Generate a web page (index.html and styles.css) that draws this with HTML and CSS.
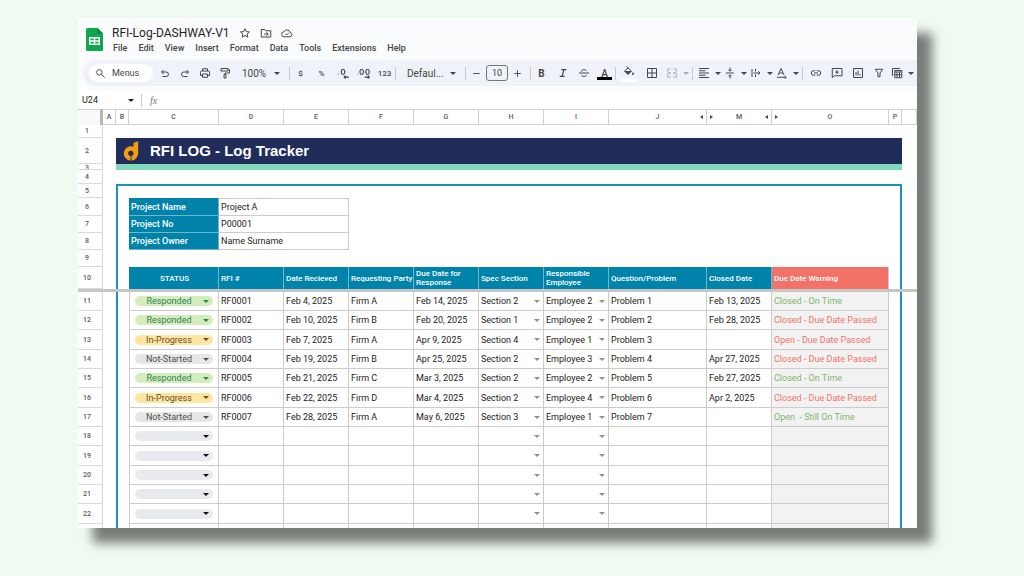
FILE: index.html
```html
<!DOCTYPE html>
<html lang="en">

<head>
    <meta charset="UTF-8">
    <meta name="viewport" content="width=device-width, initial-scale=1.0">
    <title>RFI-Log-DASHWAY-V1</title>
    <link rel="stylesheet" href="styles.css">
</head>

<body>
    <div class="window">
        <header class="doc-header">
            <svg class="doc-logo" viewBox="0 0 34 46">
                <path fill="#0fa84e" d="M3 0h20l11 11v32a3 3 0 0 1-3 3H3a3 3 0 0 1-3-3V3a3 3 0 0 1 3-3z" />
                <path fill="#0b8039" d="M23 0l11 11H23z" />
                <path fill="none" stroke="#fff" stroke-width="3" d="M7.500 19.500h19v13h-19zM17 19.500v13M7.500 26h19" />
            </svg>
            <div class="doc-info">
                <div class="title-row">
                    <h1>RFI-Log-DASHWAY-V1</h1>
                    <button class="title-btn" aria-label="Star">
                        <svg class="icon" viewBox="0 0 24 24"><path d="M12 3.500l2.600 5.800 6.400.6-4.800 4.200 1.400 6.200-5.600-3.300-5.600 3.300 1.400-6.200L3 9.900l6.400-.6z" /></svg>
                    </button>
                    <button class="title-btn" aria-label="Move">
                        <svg class="icon" viewBox="0 0 24 24"><path d="M2.500 5h7l2 2.500h10V20h-19zM8 14h8M13 10.500l3.500 3.500-3.500 3.500" /></svg>
                    </button>
                    <button class="title-btn" aria-label="Cloud status">
                        <svg class="icon" viewBox="0 0 24 24"><path d="M6.500 19.500a5 5 0 0 1-.5-10 6.500 6.500 0 0 1 12.200 1.500 4.300 4.300 0 0 1-.2 8.500zM8.500 13.500l2.500 2.500 4.500-4.500" /></svg>
                    </button>
                </div>
                <nav class="menu-row">
                    <button>File</button>
                    <button>Edit</button>
                    <button>View</button>
                    <button>Insert</button>
                    <button>Format</button>
                    <button>Data</button>
                    <button>Tools</button>
                    <button>Extensions</button>
                    <button>Help</button>
                </nav>
            </div>
        </header>

        <div class="toolbar">
            <label class="search">
                <svg class="icon" viewBox="0 0 24 24"><circle cx="9.500" cy="9.500" r="6" /><path d="M14 14l7 7" /></svg>
                <input type="text" placeholder="Menus" aria-label="Search the menus">
            </label>
            <div class="group history">
                <button class="tool" aria-label="Undo"><svg class="icon" viewBox="0 0 24 24"><path d="M9 6L5 10l4 4M5.500 10h9a4.500 4.500 0 0 1 0 9H7" /></svg></button>
                <button class="tool" aria-label="Redo"><svg class="icon" viewBox="0 0 24 24"><path d="M15 6l4 4-4 4M18.500 10h-9a4.500 4.500 0 0 0 0 9H17" /></svg></button>
                <button class="tool" aria-label="Print"><svg class="icon" viewBox="0 0 24 24"><path d="M7 8V3.500h10V8M7 17H3v-6.500A2.500 2.500 0 0 1 5.500 8h13a2.500 2.500 0 0 1 2.500 2.500V17h-4M7 14h10v6.500H7z" /></svg></button>
                <button class="tool" aria-label="Paint format"><svg class="icon" viewBox="0 0 24 24"><path d="M4 3h14v5H4zM18 5.500h3V12h-9v3M10 15h4v7h-4z" /></svg></button>
            </div>
            <span class="picker zoom">
                <select aria-label="Zoom"><option>100%</option></select>
            </span>
            <i class="sep"></i>
            <div class="group">
                <button class="tool small" aria-label="Currency">$</button>
                <button class="tool small" aria-label="Percent">%</button>
                <button class="tool" aria-label="Decrease decimals"><svg class="icon wide" viewBox="0 0 24 24"><path d="M3 14h1M12 14.500a3 4.500 0 1 1 .1 0zM22 19h-8M16.500 16.500L14 19l2.500 2.500" /></svg></button>
                <button class="tool" aria-label="Increase decimals"><svg class="icon wide" viewBox="0 0 24 24"><path d="M1 14h1M8 14.500a3 4.500 0 1 1 .1 0zM18 14.500a3 4.500 0 1 1 .1 0zM13 19h8M18.500 16.500L21 19l-2.500 2.500" /></svg></button>
                <button class="tool small" aria-label="More formats">123</button>
            </div>
            <i class="sep"></i>
            <span class="picker font">
                <select aria-label="Font"><option>Defaul...</option></select>
            </span>
            <i class="sep"></i>
            <div class="size">
                <button aria-label="Smaller"><svg class="icon" viewBox="0 0 24 24"><path d="M5 12h14" /></svg></button>
                <input type="text" value="10" aria-label="Font size">
                <button aria-label="Larger"><svg class="icon" viewBox="0 0 24 24"><path d="M5 12h14M12 5v14" /></svg></button>
            </div>
            <i class="sep"></i>
            <div class="group">
                <button class="tool text bold" aria-label="Bold">B</button>
                <button class="tool" aria-label="Italic"><svg class="icon heavy" viewBox="0 0 24 24"><path d="M8 4h12M4 20h12M14.500 4l-5 16" /></svg></button>
                <button class="tool" aria-label="Strikethrough"><svg class="icon" viewBox="0 0 24 24"><path d="M2 12h20M16.500 8c-.5-2-2-3-4.500-3S7.500 6.300 7.500 8.200c0 .8.300 1.300.8 1.800M7.500 16c.5 2 2 3 4.500 3s4.500-1.200 4.500-3" /></svg></button>
                <button class="tool text colored" aria-label="Text color">A</button>
            </div>
            <i class="sep"></i>
            <div class="group fills">
                <button class="tool fill" aria-label="Fill color"><svg class="icon" viewBox="0 0 24 24"><path d="M7 1l10 9-7 7-7-7 7-6" /><path class="solid" d="M3 10h14l-7 7zM20 12c1.500 2 2 3 2 3.800a2 2 0 0 1-4 0c0-.8.500-1.800 2-3.800z" /></svg></button>
                <button class="tool" aria-label="Borders"><svg class="icon" viewBox="0 0 24 24"><path d="M3 3h18v18H3zM12 3v18M3 12h18" /></svg></button>
                <button class="tool faded drop" aria-label="Merge cells"><svg class="icon" viewBox="0 0 24 24"><path d="M9 4H3v5M15 4h6v5M9 20H3v-5M15 20h6v-5M2 12h7M22 12h-7M6.500 9.500L9 12l-2.500 2.500M17.500 9.500L15 12l2.500 2.500" /></svg></button>
            </div>
            <i class="sep"></i>
            <div class="group aligns">
                <button class="tool drop" aria-label="Horizontal align"><svg class="icon" viewBox="0 0 24 24"><path d="M2 3h20M2 7.500h13M2 12h20M2 16.500h13M2 21h20" /></svg></button>
                <button class="tool drop" aria-label="Vertical align"><svg class="icon" viewBox="0 0 24 24"><path d="M4 12h16M12 1v7M12 23v-7M9 5.500L12 8.500l3-3M9 18.500l3-3 3 3" /></svg></button>
                <button class="tool drop" aria-label="Text wrapping"><svg class="icon" viewBox="0 0 24 24"><path d="M4 4v16M11 4v5M11 15v5M7 12h13M16.500 8.500L20 12l-3.500 3.500" /></svg></button>
                <button class="tool drop" aria-label="Text rotation"><svg class="icon" viewBox="0 0 24 24"><path d="M4 16L10 3l6 13M6 12h8M2 20.500h18M17.500 17.500l3 3-3 3" /></svg></button>
            </div>
            <i class="sep"></i>
            <div class="group inserts">
                <button class="tool" aria-label="Insert link"><svg class="icon" viewBox="0 0 24 24"><path d="M10.500 7.500H7a4.500 4.500 0 0 0 0 9h3.500M13.500 7.500H17a4.500 4.500 0 0 1 0 9h-3.500M8 12h8" /></svg></button>
                <button class="tool" aria-label="Insert comment"><svg class="icon" viewBox="0 0 24 24"><path d="M22 3H2.500v18.500l4-4H22zM12 6.500v7.500M8.200 10.200h7.600" /></svg></button>
                <button class="tool" aria-label="Insert chart"><svg class="icon" viewBox="0 0 24 24"><path d="M3 3h18v18H3zM8 10v7M12 7v10M16 14v3" /></svg></button>
                <button class="tool" aria-label="Filter"><svg class="icon" viewBox="0 0 24 24"><path d="M4.500 4.500h15L14 12v7.500h-4V12z" /></svg></button>
                <button class="tool drop" aria-label="Table views"><svg class="icon" viewBox="0 0 24 24"><path d="M7.500 7h14v14.500h-14zM18 3H3v15M7.500 10h14M7.500 15.500h14M12 11v10M17 11v10" /></svg></button>
            </div>
        </div>

        <div class="formula-bar">
            <span class="name-box"><input type="text" value="U24" aria-label="Name box"></span>
            <i class="sep"></i>
            <label class="fx" for="formula">fx</label>
            <input type="text" id="formula" class="formula">
        </div>

        <table class="sheet">
            <colgroup>
                <col class="w-num">
                <col class="w-pad">
                <col class="w-pad">
                <col class="w-status">
                <col class="w-std" span="6">
                <col class="w-problem">
                <col class="w-std">
                <col class="w-warning">
                <col class="w-pad">
                <col>
            </colgroup>
            <thead>
                <tr class="letters">
                    <td class="corner"></td>
                    <th>A</th>
                    <th>B</th>
                    <th>C</th>
                    <th>D</th>
                    <th>E</th>
                    <th>F</th>
                    <th>G</th>
                    <th>H</th>
                    <th>I</th>
                    <th><div class="hides"><i></i>J<i class="left"></i></div></th>
                    <th><div class="hides"><i class="right"></i>M<i class="left"></i></div></th>
                    <th><div class="hides"><i class="right"></i>O<i></i></div></th>
                    <th>P</th>
                    <th></th>
                </tr>
            </thead>
            <tbody>
                <tr class="gap-sm"><th class="num">1</th><td colspan="14"></td></tr>
                <tr class="banner">
                    <th class="num">2</th>
                    <td></td>
                    <td class="banner-cell" colspan="12">
                        <div class="brand">
                            <svg viewBox="0 0 47 60">
                                <path fill="#f39c12" d="M31 5l14-4v36a21.500 21.500 0 1 1-14-20z" />
                                <path fill="#202c59" d="M31 37a8 8 0 1 1-8-8 8 8 0 0 1 8 8zM22 45h3v14h-3z" />
                            </svg>
                            <h2>RFI LOG - Log Tracker</h2>
                        </div>
                    </td>
                    <td></td>
                </tr>
                <tr class="stripe">
                    <th class="num"><div>3</div></th>
                    <td></td>
                    <td class="stripe-cell" colspan="12"></td>
                    <td></td>
                </tr>
                <tr class="gap"><th class="num">4</th><td colspan="14"></td></tr>
                <tr class="gap frame-top"><th class="num">5</th><td></td><td class="frame-both" colspan="12"></td><td></td></tr>
                <tr class="info">
                    <th class="num">6</th><td></td><td class="frame-left"></td>
                    <th class="info-name" scope="row">Project Name</th><td class="info-value" colspan="2">Project A</td>
                    <td class="frame-right" colspan="8"></td><td></td>
                </tr>
                <tr class="info">
                    <th class="num">7</th><td></td><td class="frame-left"></td>
                    <th class="info-name" scope="row">Project No</th><td class="info-value" colspan="2">P00001</td>
                    <td class="frame-right" colspan="8"></td><td></td>
                </tr>
                <tr class="info">
                    <th class="num">8</th><td></td><td class="frame-left"></td>
                    <th class="info-name" scope="row">Project Owner</th><td class="info-value" colspan="2">Name Surname</td>
                    <td class="frame-right" colspan="8"></td><td></td>
                </tr>
                <tr class="info"><th class="num">9</th><td></td><td class="frame-both" colspan="12"></td><td></td></tr>
                <tr class="heads">
                    <th class="num">10</th><td></td><td class="frame-left"></td>
                    <th class="head center">STATUS</th>
                    <th class="head">RFI #</th>
                    <th class="head">Date Recieved</th>
                    <th class="head">Requesting Party</th>
                    <th class="head">Due Date for<br>Response</th>
                    <th class="head">Spec Section</th>
                    <th class="head">Responsible<br>Employee</th>
                    <th class="head">Question/Problem</th>
                    <th class="head">Closed Date</th>
                    <th class="head alert">Due Date Warning</th>
                    <td class="frame-right"></td><td></td>
                </tr>
                <tr class="freeze"><td colspan="15"></td></tr>
            </tbody>
            <tbody id="log-rows">
                <!-- Log entries are added by the script -->
            </tbody>
        </table>
    </div>

    <script>
        const logRows = document.getElementById('log-rows');

        // status, rfi, received, party, due, section, employee, problem, closed, warning
        const entries = [
            ['Responded', 'RF0001', 'Feb 4, 2025', 'Firm A', 'Feb 14, 2025', 'Section 2', 'Employee 2', 'Problem 1', 'Feb 13, 2025', 'Closed - On Time'],
            ['Responded', 'RF0002', 'Feb 10, 2025', 'Firm B', 'Feb 20, 2025', 'Section 1', 'Employee 2', 'Problem 2', 'Feb 28, 2025', 'Closed - Due Date Passed'],
            ['In-Progress', 'RF0003', 'Feb 7, 2025', 'Firm A', 'Apr 9, 2025', 'Section 4', 'Employee 1', 'Problem 3', '', 'Open - Due Date Passed'],
            ['Not-Started', 'RF0004', 'Feb 19, 2025', 'Firm B', 'Apr 25, 2025', 'Section 2', 'Employee 3', 'Problem 4', 'Apr 27, 2025', 'Closed - Due Date Passed'],
            ['Responded', 'RF0005', 'Feb 21, 2025', 'Firm C', 'Mar 3, 2025', 'Section 2', 'Employee 2', 'Problem 5', 'Feb 27, 2025', 'Closed - On Time'],
            ['In-Progress', 'RF0006', 'Feb 22, 2025', 'Firm D', 'Mar 4, 2025', 'Section 2', 'Employee 4', 'Problem 6', 'Apr 2, 2025', 'Closed - Due Date Passed'],
            ['Not-Started', 'RF0007', 'Feb 28, 2025', 'Firm A', 'May 6, 2025', 'Section 3', 'Employee 1', 'Problem 7', '', 'Open  - Still On Time']
        ];

        const firstRow = 11;
        const lastRow = 22;

        function dropdown(kind, label, value) {
            return `<span class="${kind}"><select aria-label="${label}"><option>${value}</option></select></span>`;
        }

        // One extra unnumbered row runs off the bottom of the window
        for (let n = firstRow; n <= lastRow + 1; n++) {
            const e = entries[n - firstRow] || Array(10).fill('');
            const status = e[0] ? e[0].toLowerCase() : 'empty';
            const warning = e[9].includes('Passed') ? 'late' : 'on-time';
            const row = document.createElement('tr');
            row.innerHTML = `
                <th class="num">${n <= lastRow ? n : ''}</th><td></td><td class="frame-left"></td>
                <td class="cell first">${dropdown('chip ' + status, 'Status', e[0])}</td>
                <td class="cell">${e[1]}</td>
                <td class="cell">${e[2]}</td>
                <td class="cell">${e[3]}</td>
                <td class="cell">${e[4]}</td>
                <td class="cell">${dropdown('pick', 'Spec section', e[5])}</td>
                <td class="cell">${dropdown('pick', 'Responsible employee', e[6])}</td>
                <td class="cell">${e[7]}</td>
                <td class="cell">${e[8]}</td>
                <td class="cell warning ${warning}">${e[9]}</td>
                <td class="frame-right"></td><td></td>`;
            logRows.appendChild(row);
        }
    </script>
</body>

</html>
```

FILE: styles.css
```css
* {
    box-sizing: border-box;
}

body {
    display: flex;
    height: 100vh;
    margin: 0;
    padding: 18px 107px 48px 78px;
    background-color: #effaf0;
    font-family: Roboto, "Liberation Sans", sans-serif;
    color: #444746;
}

button,
input,
select {
    margin: 0;
    padding: 0;
    border: 0;
    background: none;
    font: inherit;
    color: inherit;
    appearance: none;
    outline: none;
}

.window {
    flex: 1;
    min-width: 0;
    overflow: hidden;
    background-color: #ffffff;
    box-shadow: 15px 15px 10px rgba(0, 0, 0, 0.5);
}

.icon {
    display: block;
    width: 12px;
    height: 12px;
    fill: none;
    stroke: currentColor;
    stroke-width: 2;
}

.icon.heavy {
    width: 10px;
    height: 10px;
    stroke-width: 3;
}

.icon.wide {
    width: 14px;
    height: 14px;
}

.icon .solid {
    fill: currentColor;
    stroke: none;
}

/* Document header */
.doc-header {
    display: flex;
    gap: 9px;
    padding: 7px 8px 5px;
    background-color: #f9fbfd;
}

.doc-logo {
    width: 17px;
    height: 23px;
    margin-top: 3px;
}

.title-row {
    display: flex;
    align-items: center;
    gap: 9px;
    height: 16px;
}

h1 {
    margin: 0;
    font-size: 12px;
    font-weight: 400;
    color: #1f1f1f;
}

.menu-row {
    display: flex;
    gap: 11px;
    height: 14px;
    padding-left: 1px;
    font-size: 9px;
    font-weight: 500;
}

/* Toolbar */
.toolbar {
    display: flex;
    align-items: center;
    height: 26px;
    margin-left: 5px;
    padding-left: 6px;
    border-radius: 13px 0 0 13px;
    background-color: #eff3f9;
    box-shadow: 0 0 0 5px #f9fbfd;
}

.search {
    display: flex;
    align-items: center;
    gap: 6px;
    width: 64px;
    height: 18px;
    margin-right: 2px;
    padding-left: 6px;
    border-radius: 9px;
    background-color: #ffffff;
    font-size: 9px;
}

.search .icon {
    flex: none;
    width: 11px;
    height: 11px;
}

.search input {
    width: 36px;
}

.search input::placeholder {
    color: #444746;
}

.group {
    display: flex;
    flex: none;
    align-items: center;
}

.tool {
    display: flex;
    flex: none;
    align-items: center;
    justify-content: center;
    width: 21px;
    height: 18px;
}

.history .tool {
    width: 20px;
}

.tool.text {
    font-size: 10px;
    font-weight: 500;
}

.tool.small {
    font-size: 8px;
    font-weight: 500;
}

.tool.bold {
    font-weight: 700;
}

.tool.colored::before {
    content: "";
    position: absolute;
    width: 15px;
    height: 3px;
    margin-top: 10px;
    background-color: #000000;
}

.tool.fill {
    border-bottom: 3px solid #ffffff;
}

.tool.faded {
    opacity: 0.4;
}

.tool.drop {
    gap: 5px;
    width: 26px;
}

/* Small triangle used by every drop-down */
.tool.drop::after,
.picker::after,
.name-box::after,
.chip::after,
.pick::after {
    content: "";
    border: 3px solid transparent;
    border-top-color: currentColor;
    border-bottom: 0;
    pointer-events: none;
}

.sep {
    flex: none;
    width: 1px;
    height: 13px;
    background-color: #c7cbd1;
}

.picker {
    display: flex;
    flex: none;
    align-items: center;
    font-size: 10px;
}

.zoom {
    width: 54px;
    padding-left: 7px;
}

.zoom select {
    width: 32px;
}

.font {
    width: 69px;
    padding-left: 11px;
}

.font select {
    width: 43px;
}

.size {
    display: flex;
    flex: none;
    align-items: center;
    gap: 4px;
    width: 64px;
    padding-left: 5px;
}

.size .icon {
    width: 11px;
    height: 11px;
}

.size input {
    width: 22px;
    height: 16px;
    border: 1px solid #747775;
    border-radius: 3px;
    font-size: 9px;
    text-align: center;
}

.fills {
    gap: 2px;
    padding: 0 2px;
}

.fill {
    width: 17px;
    margin: 0 2px;
}

.aligns {
    padding: 0 2px 0 3px;
}

.inserts {
    padding-left: 2px;
}

/* Formula bar */
.formula-bar {
    display: flex;
    align-items: center;
    height: 18px;
    margin-top: 5px;
    font-size: 9px;
}

.name-box {
    display: flex;
    align-items: center;
    width: 63px;
    padding-left: 4px;
    color: #1f1f1f;
}

.name-box input {
    width: 46px;
}

.fx {
    padding: 0 8px;
    font-family: "Liberation Serif", serif;
    font-size: 10px;
    font-style: italic;
    color: #747775;
}

.formula {
    flex: 1;
}

/* Sheet */
.sheet {
    width: 100%;
    table-layout: fixed;
    border-collapse: separate;
    border-spacing: 0;
    font-size: 9px;
    line-height: 10px;
    color: #222222;
}

.sheet td,
.sheet th {
    padding: 0;
    white-space: nowrap;
}

.w-num {
    width: 25px;
}

.w-pad {
    width: 13px;
}

.w-status {
    width: 90px;
}

.w-std {
    width: 65px;
}

.w-problem {
    width: 98px;
}

.w-warning {
    width: 117px;
}

.letters {
    height: 16px;
}

.letters th {
    border: solid #d0d0d0;
    border-width: 1px 1px 1px 0;
    font-size: 7px;
    font-weight: 500;
    color: #575a5a;
}

.letters .corner {
    border-top: 1px solid #d0d0d0;
    border-right: 3px solid #b7b7b7;
    background-color: #f8f9fa;
}

.hides {
    display: flex;
    align-items: center;
    justify-content: space-between;
    padding: 0 3px;
}

.hides i {
    width: 3px;
}

.hides .left,
.hides .right {
    border: solid transparent;
    border-width: 2px 0;
}

.hides .left {
    border-right: 3px solid #444746;
}

.hides .right {
    border-left: 3px solid #444746;
}

.sheet .num {
    padding-right: 6px;
    border-right: 1px solid #d9d9d9;
    border-bottom: 1px solid #d9d9d9;
    font-size: 7px;
    font-weight: 500;
    text-align: center;
    color: #575a5a;
}

.gap-sm {
    height: 13px;
}

.gap {
    height: 14px;
}

.banner {
    height: 26px;
}

.banner-cell {
    background-color: #202c59;
}

.brand {
    display: flex;
    align-items: center;
    gap: 11px;
    padding-left: 7px;
}

.brand svg {
    width: 16px;
    height: 20px;
}

h2 {
    margin: 0;
    font-family: "Liberation Sans", Arial, sans-serif;
    font-size: 15px;
    line-height: 20px;
    color: #ffffff;
}

.stripe {
    height: 6px;
}

.stripe .num div {
    height: 5px;
    overflow: hidden;
    line-height: 8px;
}

.stripe-cell {
    background-color: #82d8bb;
}

.frame-left,
.frame-both {
    border-left: 2px solid #1a93b5;
}

.frame-right,
.frame-both {
    border-right: 2px solid #1a93b5;
}

.frame-top .frame-both {
    border-top: 2px solid #1a93b5;
}

.info {
    height: 17px;
}

.frame-top + .info {
    height: 18px;
}

.sheet .info-name,
.sheet .head {
    padding-left: 2px;
    border-right: 1px solid #6fb6cc;
    background-color: #0083ab;
    text-align: left;
    color: #ffffff;
}

.sheet .info-name {
    border-bottom: 1px solid #6fb6cc;
    font-size: 9px;
    font-weight: 500;
}

.sheet .info-value {
    padding-left: 2px;
    border-right: 1px solid #cccccc;
    border-bottom: 1px solid #cccccc;
}

.frame-top + .info .info-value {
    border-top: 1px solid #cccccc;
}

.heads {
    height: 22px;
}

.sheet .head {
    font-size: 8px;
    font-weight: 500;
    line-height: 9px;
}

.sheet .head.center {
    text-align: center;
}

.sheet .head.alert {
    border-right-color: #cccccc;
    background-color: #f27267;
}

.freeze {
    height: 3px;
    background-color: #c6c6c6;
}

#log-rows tr {
    height: 19px;
}

#log-rows tr:nth-child(3n) {
    height: 20px;
}

.sheet .cell {
    padding-left: 2px;
    border-right: 1px solid #cccccc;
    border-bottom: 1px solid #cccccc;
}

.sheet .first {
    padding: 0 5px;
    border-left: 1px solid #cccccc;
}

.sheet .warning {
    background-color: #f2f2f2;
    white-space: pre;
}

.on-time {
    color: #7fb56f;
}

.late {
    color: #f27267;
}

.chip,
.pick {
    display: flex;
    align-items: center;
}

.chip {
    height: 10px;
    padding-right: 4px;
    border-radius: 5px;
}

.chip select,
.pick select {
    flex: 1;
    min-width: 0;
    height: 10px;
}

.chip select {
    text-align: center;
    text-align-last: center;
}

.pick {
    padding-right: 3px;
}

.pick::after {
    opacity: 0.5;
}

.responded {
    background-color: #d4edbc;
    color: #2f8358;
}

.in-progress {
    background-color: #ffe5a0;
    color: #6b4d2c;
}

.not-started {
    background-color: #e6e6e6;
    color: #505050;
}

.empty {
    background-color: #e8eaed;
    color: #111111;
}
```
